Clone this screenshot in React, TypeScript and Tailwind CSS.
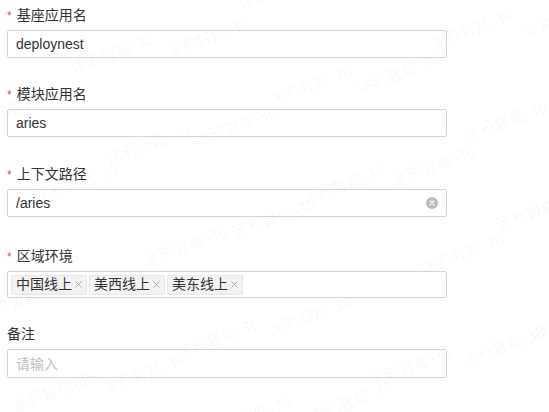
import { useState } from "react";

type Field = {
    label: string;
    required: boolean;
    value: string;
    gap: string;
};

const textFields: Field[] = [
    { label: "基座应用名", required: true, value: "deploynest", gap: "mb-[21px]" },
    { label: "模块应用名", required: true, value: "aries", gap: "mb-[22px]" },
];

const regions = ["中国线上", "美西线上", "美东线上"];

// watermark spots, centre minus half the text box
const marks: string[] = [
    "left-[68px] top-[41px]",
    "left-[163px] top-[26px]",
    "left-[236px] top-[-23px]",
    "left-[427px] top-[17px]",
    "left-[521px] top-[7px]",
    "left-[266px] top-[73px]",
    "left-[354px] top-[61px]",
    "left-[461px] top-[109px]",
    "left-[191px] top-[114px]",
    "left-[104px] top-[132px]",
    "left-[-24px] top-[94px]",
    "left-[32px] top-[171px]",
    "left-[299px] top-[172px]",
    "left-[389px] top-[154px]",
    "left-[229px] top-[207px]",
    "left-[141px] top-[234px]",
    "left-[493px] top-[199px]",
    "left-[418px] top-[241px]",
    "left-[-24px] top-[289px]",
    "left-[173px] top-[326px]",
    "left-[99px] top-[361px]",
    "left-[9px] top-[379px]",
    "left-[266px] top-[304px]",
    "left-[366px] top-[354px]",
    "left-[459px] top-[334px]",
    "left-[531px] top-[304px]",
    "left-[306px] top-[389px]",
    "left-[206px] top-[404px]",
];

function Label({ text, required }: { text: string; required: boolean }) {
    return (
        <div className="flex h-[30px] items-center text-[14px] text-[#333]">
            {required && <span className="mr-[5px] mt-[2px] text-[12px] text-[#f5484b]">*</span>}
            {text}
        </div>
    );
}

export default function App() {
    const [path, setPath] = useState("/aries");
    const [tags, setTags] = useState(regions);

    return (
        <div className="relative h-[412px] w-[549px] overflow-hidden bg-white font-['Liberation_Sans','Noto_Sans_CJK_SC',sans-serif]">
            <div className="w-[447px] pl-[7px]">
                {textFields.map((f) => (
                    <div key={f.label} className={f.gap}>
                        <Label text={f.label} required={f.required} />
                        <div className="flex h-[28px] items-center rounded-[2px] border border-[#d4d4d4] px-[8px] text-[14px] text-[#333]">
                            {f.value}
                        </div>
                    </div>
                ))}

                <div className="mb-[24px]">
                    <Label text="上下文路径" required />
                    <div className="flex h-[28px] items-center justify-between rounded-[2px] border border-[#d4d4d4] pl-[8px] pr-[8px] text-[14px] text-[#333]">
                        <span>{path}</span>
                        <button
                            onClick={() => setPath("")}
                            className="flex h-[12px] w-[12px] items-center justify-center rounded-full bg-[#bdbdbd]"
                        >
                            <svg width="6" height="6" viewBox="0 0 6 6">
                                <path d="M1 1L5 5M5 1L1 5" stroke="white" strokeWidth="1.3" strokeLinecap="round" />
                            </svg>
                        </button>
                    </div>
                </div>

                <div className="mb-[21px]">
                    <Label text="区域环境" required />
                    <div className="flex h-[27px] items-center gap-[2px] rounded-[2px] border border-[#d4d4d4] px-[3px]">
                        {tags.map((t) => (
                            <span
                                key={t}
                                className="flex h-[20px] items-center rounded-[2px] border border-[#e6e6e6] bg-[#f3f3f3] pl-[4px] pr-[4px] text-[14px] text-[#333]"
                            >
                                {t}
                                <button
                                    onClick={() => setTags(tags.filter((x) => x !== t))}
                                    className="ml-[2px] flex h-[10px] w-[8px] items-center justify-center"
                                >
                                    <svg width="7" height="7" viewBox="0 0 7 7">
                                        <path d="M0.5 0.5L6.5 6.5M6.5 0.5L0.5 6.5" stroke="#a3a3a3" strokeWidth="0.9" />
                                    </svg>
                                </button>
                            </span>
                        ))}
                    </div>
                </div>

                <div>
                    <Label text="备注" required={false} />
                    <input
                        placeholder="请输入"
                        className="block h-[29px] w-full rounded-[2px] border border-[#d4d4d4] px-[8px] text-[14px] text-[#333] outline-none placeholder:text-[#c0c0c0]"
                    />
                </div>
            </div>

            <div className="pointer-events-none absolute inset-0">
                {marks.map((m) => (
                    <span
                        key={m}
                        className={`absolute ${m} w-[88px] -rotate-[20deg] whitespace-nowrap text-[16px] leading-[22px] text-black/[0.045] font-['Noto_Sans_CJK_SC',sans-serif]`}
                    >
                        涂鸦智能-36
                    </span>
                ))}
            </div>
        </div>
    );
}
